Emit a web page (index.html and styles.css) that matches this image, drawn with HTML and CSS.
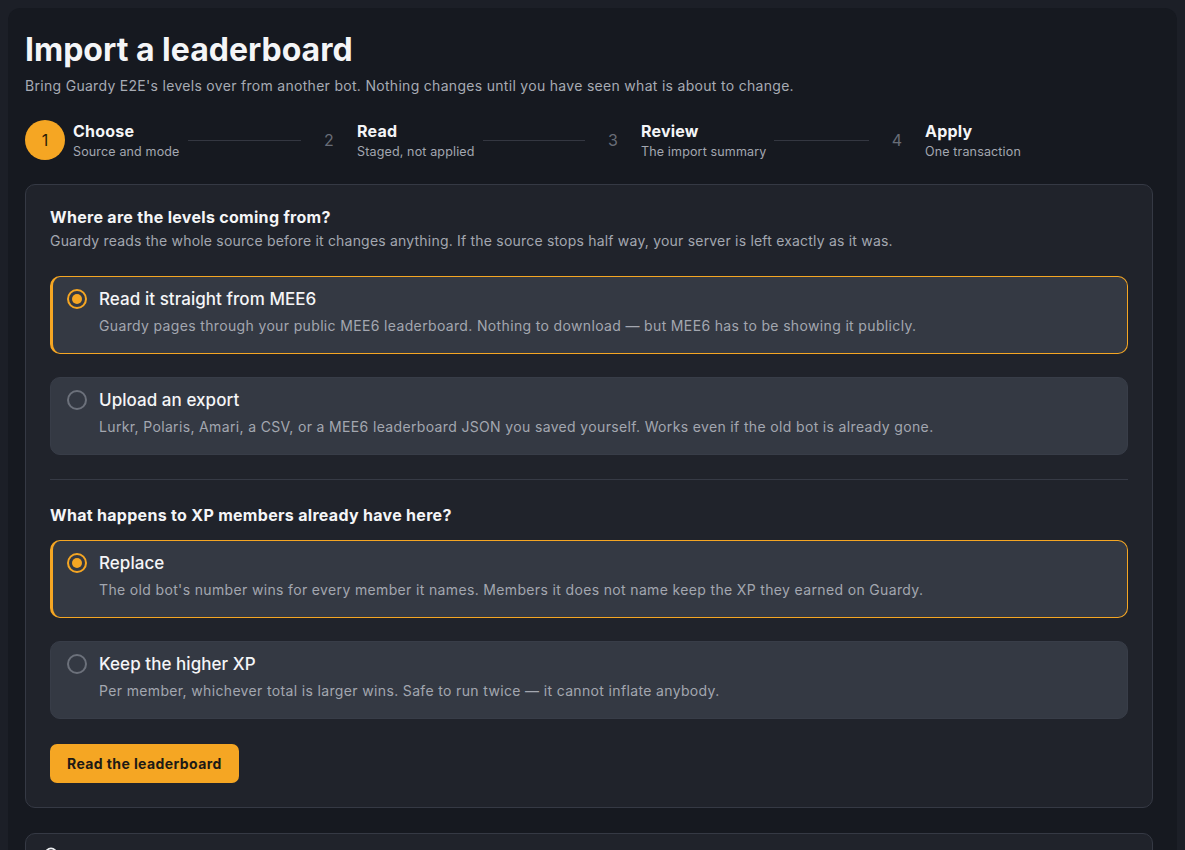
FILE: index.html
```html
<!DOCTYPE html>
<html lang="en">
<head>
<meta charset="utf-8">
<title>Import a leaderboard</title>
<link rel="stylesheet" href="styles.css">
</head>
<body>
<div class="page">
  <main class="shell">
    <h1 class="title">Import a leaderboard</h1>
    <p class="lead">Bring Guardy E2E's levels over from another bot. Nothing changes until you have seen what is about to change.</p>

    <ol class="steps">
      <li class="step active">
        <span class="num">1</span>
        <div class="label"><div class="name">Choose</div><div class="hint">Source and mode</div></div>
        <span class="rule"></span>
      </li>
      <li class="step">
        <span class="num">2</span>
        <div class="label"><div class="name">Read</div><div class="hint">Staged, not applied</div></div>
        <span class="rule"></span>
      </li>
      <li class="step">
        <span class="num">3</span>
        <div class="label"><div class="name">Review</div><div class="hint">The import summary</div></div>
        <span class="rule"></span>
      </li>
      <li class="step">
        <span class="num">4</span>
        <div class="label"><div class="name">Apply</div><div class="hint">One transaction</div></div>
      </li>
    </ol>

    <section class="panel">
      <h2 class="q">Where are the levels coming from?</h2>
      <p class="qsub">Guardy reads the whole source before it changes anything. If the source stops half way, your server is left exactly as it was.</p>
      <div class="options first">
        <div class="opt selected">
          <span class="radio"></span>
          <div class="opt-body">
            <div class="opt-title">Read it straight from MEE6</div>
            <div class="opt-desc">Guardy pages through your public MEE6 leaderboard. Nothing to download — but MEE6 has to be showing it publicly.</div>
          </div>
        </div>
        <div class="opt">
          <span class="radio"></span>
          <div class="opt-body">
            <div class="opt-title">Upload an export</div>
            <div class="opt-desc">Lurkr, Polaris, Amari, a CSV, or a MEE6 leaderboard JSON you saved yourself. Works even if the old bot is already gone.</div>
          </div>
        </div>
      </div>

      <hr class="sep">

      <h2 class="q q2">What happens to XP members already have here?</h2>
      <div class="options second">
        <div class="opt selected">
          <span class="radio"></span>
          <div class="opt-body">
            <div class="opt-title">Replace</div>
            <div class="opt-desc">The old bot's number wins for every member it names. Members it does not name keep the XP they earned on Guardy.</div>
          </div>
        </div>
        <div class="opt">
          <span class="radio"></span>
          <div class="opt-body">
            <div class="opt-title">Keep the higher XP</div>
            <div class="opt-desc">Per member, whichever total is larger wins. Safe to run twice — it cannot inflate anybody.</div>
          </div>
        </div>
      </div>

      <button class="btn" type="button">Read the leaderboard</button>
    </section>

    <section class="panel panel-next">
      <svg class="ico" width="14" height="14" viewBox="0 0 14 14" aria-hidden="true"><circle cx="7" cy="7" r="5.6" fill="none" stroke="#eceef1" stroke-width="1.8"/></svg>
    </section>
  </main>
</div>
</body>
</html>
```

FILE: styles.css
```css
* { box-sizing: border-box; }

html, body {
  margin: 0;
  background: #1c1f27;
  font-family: Inter, "Noto Sans", "DejaVu Sans", sans-serif;
  color: #f1f2f4;
  -webkit-font-smoothing: antialiased;
}

.page {
  padding: 8px 8px 0 8px;
  height: 850px;
  overflow: hidden;
}

.shell {
  background: #161920;
  border-radius: 12px;
  padding: 22px 24px 40px 17px;
  min-height: 900px;
}

.title {
  margin: 0;
  font-size: 32px;
  line-height: 40px;
  font-weight: 700;
  color: #f4f5f7;
}

.lead {
  margin: 6px 0 0;
  font-size: 14px;
  line-height: 20px;
  letter-spacing: 0.3px;
  color: #a7abb4;
}

.steps {
  list-style: none;
  margin: 24px 0 0;
  padding: 0;
  display: grid;
  grid-template-columns: repeat(4, 1fr);
  column-gap: 8px;
  width: 1128px;
}

.step {
  display: flex;
  align-items: center;
  height: 40px;
}

.num {
  flex: 0 0 40px;
  width: 40px;
  height: 40px;
  border-radius: 50%;
  display: flex;
  align-items: center;
  justify-content: center;
  font-size: 16px;
  color: #686d77;
}

.step.active .num {
  background: #f5a623;
  color: #2a1d05;
}

.label {
  margin-left: 8px;
  white-space: nowrap;
}

.name {
  font-size: 16px;
  line-height: 20px;
  font-weight: 700;
  letter-spacing: 0.2px;
  color: #f4f5f7;
}

.hint {
  margin-top: 3px;
  font-size: 12.5px;
  line-height: 16px;
  letter-spacing: 0.15px;
  color: #a3a7b0;
}

.rule {
  flex: 1;
  height: 1px;
  margin-left: 8px;
  background: #343741;
}

.panel {
  margin-top: 24px;
  width: 1128px;
  background: #20232b;
  border: 1px solid #353944;
  border-radius: 10px;
  padding: 22px 24px 24px;
}

.q {
  margin: 0;
  font-size: 16px;
  line-height: 20px;
  font-weight: 700;
  letter-spacing: 0.3px;
  color: #f4f5f7;
}

.qsub {
  margin: 4px 0 0;
  font-size: 14px;
  line-height: 20px;
  letter-spacing: 0.2px;
  color: #a3a7b0;
}

.options {
  display: flex;
  flex-direction: column;
  gap: 23px;
}

.options.first { margin-top: 25px; }
.options.second { margin-top: 15px; }

.opt {
  display: flex;
  align-items: flex-start;
  gap: 12px;
  background: #343943;
  border: 1px solid #383d48;
  border-radius: 10px;
  padding: 11px 16px 16px 16px;
  height: 78px;
}

.opt.selected {
  border-color: #f5a623;
  border-left-width: 3px;
  padding-left: 14px;
}

.radio {
  flex: 0 0 20px;
  width: 20px;
  height: 20px;
  margin-top: 1px;
  border-radius: 50%;
  border: 2px solid #6c717b;
  position: relative;
}

.opt.selected .radio {
  border-color: #f5a623;
}

.opt.selected .radio::after {
  content: "";
  position: absolute;
  left: 3px;
  top: 3px;
  width: 10px;
  height: 10px;
  border-radius: 50%;
  background: #f5a623;
}

.opt-title {
  font-size: 17px;
  line-height: 22px;
  font-weight: 500;
  letter-spacing: 0.05px;
  color: #f4f5f7;
}

.opt-desc {
  margin-top: 6px;
  font-size: 14px;
  line-height: 20px;
  letter-spacing: 0.35px;
  color: #a3a7b0;
}

.sep {
  border: 0;
  height: 1px;
  background: #363a45;
  margin: 24px 0 25px;
}

.btn {
  margin-top: 25px;
  display: block;
  height: 39px;
  padding: 0 17px;
  border: 0;
  border-radius: 7px;
  background: #f5a623;
  color: #1c1a16;
  font-family: inherit;
  font-size: 14px;
  letter-spacing: 0.4px;
  font-weight: 700;
}

.panel-next {
  margin-top: 25px;
  padding: 13px 18px;
  height: 120px;
}

.ico {
  display: block;
}
```
